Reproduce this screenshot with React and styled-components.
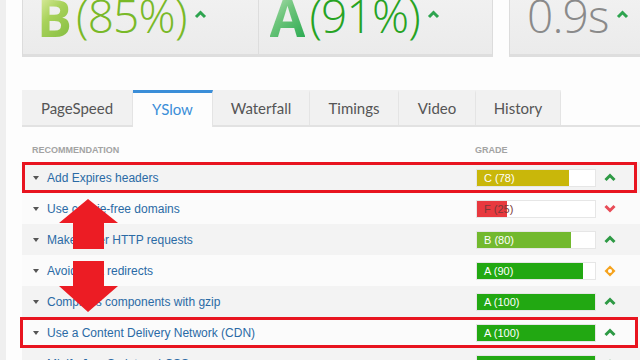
import React from "react";
import styled, { createGlobalStyle } from "styled-components";

const GlobalStyle = createGlobalStyle`
  html, body {
    margin: 0;
    padding: 0;
    background: #fdfdfd;
    overflow: hidden;
  }
  body {
    font-family: "Liberation Sans", Arial, sans-serif;
  }
`;

const rows = [
  { name: "Add Expires headers", grade: "C", score: 78, trend: "up", boxed: true },
  { name: "Use cookie-free domains", grade: "F", score: 25, trend: "down" },
  { name: "Make fewer HTTP requests", grade: "B", score: 80, trend: "up" },
  { name: "Avoid URL redirects", grade: "A", score: 90, trend: "same" },
  { name: "Compress components with gzip", grade: "A", score: 100, trend: "up" },
  { name: "Use a Content Delivery Network (CDN)", grade: "A", score: 100, trend: "up", boxed: true },
  { name: "Minify JavaScript and CSS", grade: "A", score: 100, trend: "up" },
];

const gradeColors = {
  A: "#22a812",
  B: "#72b92e",
  C: "#c9b70a",
  F: "#e8393f",
};

const tabs = [
  { label: "PageSpeed", width: 111 },
  { label: "YSlow", width: 80, active: true },
  { label: "Waterfall", width: 97 },
  { label: "Timings", width: 89 },
  { label: "Video", width: 77 },
  { label: "History", width: 85 },
];

const Page = styled.div`
  display: flex;
  height: 360px;
`;

const Strip = styled.div`
  width: 6px;
  flex: none;
  background: #efefef;
`;

const Main = styled.div`
  flex: 1;
  padding-left: 16px;
  min-width: 0;
`;

const ScoreRow = styled.div`
  display: flex;
  gap: 16px;
  margin-top: -24px;
  height: 81px;
`;

const Card = styled.div`
  display: flex;
  flex: none;
  width: ${(p) => p.$width}px;
  background: linear-gradient(#f3f3f3, #ebebeb);
  border: 1px solid #dcdcdc;
  border-bottom: 3px solid #dedede;
  box-sizing: border-box;
`;

const Score = styled.div`
  display: flex;
  align-items: flex-start;
  padding: 0 0 0 ${(p) => p.$pad}px;
  width: ${(p) => p.$width}px;
  box-sizing: border-box;
  border-right: ${(p) => (p.$divider ? "1px solid #dddddd" : "none")};
  font-family: "Open Sans", "Liberation Sans", sans-serif;
`;

const Letter = styled.span`
  font-size: 52px;
  font-weight: 700;
  line-height: 62px;
  margin-top: 9px;
  background: ${(p) => p.$gradient};
  -webkit-background-clip: text;
  background-clip: text;
  color: transparent;
  margin-right: 4px;
`;

const Value = styled.span`
  font-size: 46px;
  font-weight: 300;
  line-height: 64px;
  margin-top: 6px;
  color: ${(p) => p.$color};
  letter-spacing: -0.8px;
`;

const Caret = styled.svg`
  margin: 33px 0 0 7px;
  flex: none;
`;

const TabBar = styled.div`
  display: flex;
  margin-top: 33px;
  border-bottom: 2px solid #e2e2e2;
  height: 35px;
`;

const Tab = styled.div`
  width: ${(p) => p.$width}px;
  display: flex;
  align-items: center;
  justify-content: center;
  padding-bottom: 3px;
  font-family: Lato, "Open Sans", sans-serif;
  font-size: 15px;
  color: ${(p) => (p.$active ? "#3b8ed8" : "#555")};
  background: ${(p) => (p.$active ? "#fdfdfd" : "#f1f1f1")};
  border-top: 3px solid ${(p) => (p.$active ? "#3b8ed8" : "#f1f1f1")};
  border-right: 1px solid #e4e4e4;
  margin-bottom: ${(p) => (p.$active ? "-2px" : "0")};
  box-sizing: border-box;
`;

const Grid = styled.div`
  display: grid;
  grid-template-columns: 443px 120px 1fr;
  align-items: center;
  padding-left: 11px;
`;

const Header = styled(Grid)`
  height: 35px;
  padding-top: 10px;
  box-sizing: border-box;
  font-size: 9px;
  font-weight: 700;
  color: #a3a3a3;
  text-transform: uppercase;
  padding-left: 10px;
`;

const Table = styled.div`
  position: relative;
`;

const Row = styled(Grid)`
  position: relative;
  height: 31px;
  background: ${(p) => (p.$odd ? "#f3f3f3" : "#fbfbfb")};
  &::after {
    content: "";
    display: ${(p) => (p.$boxed ? "block" : "none")};
    position: absolute;
    left: ${(p) => (p.$first ? 0 : -2)}px;
    right: ${(p) => (p.$first ? 3 : 2)}px;
    top: 0;
    bottom: 0;
    border: 3px solid #e8141f;
    pointer-events: none;
  }
`;

const Name = styled.div`
  display: flex;
  align-items: center;
  font-size: 12px;
  color: #2a6aa5;
  white-space: nowrap;
  &::before {
    content: "";
    width: 0;
    height: 0;
    border-left: 3px solid transparent;
    border-right: 3px solid transparent;
    border-top: 4px solid #555;
    margin-right: 8px;
  }
`;

const Bar = styled.div`
  position: relative;
  height: 18px;
  background: #fff;
  border: 1px solid #e6e6e6;
  box-sizing: border-box;
`;

const Fill = styled.div`
  height: 100%;
  background: ${(p) => p.$color};
`;

const BarLabel = styled.span`
  position: absolute;
  left: 7px;
  top: 0;
  line-height: 16px;
  font-size: 11px;
  color: ${(p) => (p.$dark ? "#7a3a3a" : "#fff")};
`;

const Trend = styled.div`
  margin-left: 8px;
  display: flex;
  align-items: center;
`;

const Arrows = styled.svg`
  position: absolute;
  left: 0;
  top: 0;
  pointer-events: none;
`;

function ScoreCaret() {
  return (
    <Caret width="13" height="9" viewBox="0 0 13 9">
      <polyline points="2,7 6.5,2.5 11,7" fill="none" stroke="#2ea44f" strokeWidth="3" />
    </Caret>
  );
}

function TrendIcon({ type }) {
  if (type === "down") {
    return (
      <svg width="12" height="9" viewBox="0 0 12 9">
        <polyline points="1.5,2 6,6.5 10.5,2" fill="none" stroke="#e84c57" strokeWidth="3" />
      </svg>
    );
  }
  if (type === "same") {
    return (
      <svg width="12" height="12" viewBox="0 0 12 12">
        <polygon points="6,0.5 11.5,6 6,11.5 0.5,6" fill="#f5a21c" />
        <circle cx="6" cy="6" r="2" fill="#fff" />
      </svg>
    );
  }
  return (
    <svg width="12" height="9" viewBox="0 0 12 9">
      <polyline points="1.5,7 6,2.5 10.5,7" fill="none" stroke="#2e9a45" strokeWidth="3" />
    </svg>
  );
}

export default function App() {
  return (
    <>
      <GlobalStyle />
      <Page>
        <Strip />
        <Main>
          <ScoreRow>
            <Card $width={471}>
              <Score $width={236} $pad={14} $divider>
                <Letter $gradient="linear-gradient(135deg, #f3f7c0 0%, #a8d25a 45%, #7ab83a 100%)">B</Letter>
                <Value $color="#79b928">(85%)</Value>
                <ScoreCaret />
              </Score>
              <Score $width={234} $pad={11}>
                <Letter $gradient="linear-gradient(135deg, #cfe9cc 0%, #6cc47a 45%, #1ea54a 100%)">A</Letter>
                <Value $color="#27a323">(91%)</Value>
                <ScoreCaret />
              </Score>
            </Card>
            <Card $width={160}>
              <Score $width={160} $pad={17}>
                <Value $color="#8a8a8a">0.9s</Value>
                <ScoreCaret />
              </Score>
            </Card>
          </ScoreRow>

          <TabBar>
            {tabs.map((t) => (
              <Tab key={t.label} $active={t.active} $width={t.width}>
                {t.label}
              </Tab>
            ))}
          </TabBar>

          <Header>
            <span>Recommendation</span>
            <span>Grade</span>
          </Header>

          <Table>
            {rows.map((r, i) => (
              <Row key={r.name} $odd={i % 2 === 0} $boxed={r.boxed} $first={i === 0}>
                <Name>{r.name}</Name>
                <Bar>
                  <Fill $color={gradeColors[r.grade]} style={{ width: `${r.score}%` }} />
                  <BarLabel $dark={r.grade === "F"}>
                    {r.grade} ({r.score})
                  </BarLabel>
                </Bar>
                <Trend>
                  <TrendIcon type={r.trend} />
                </Trend>
              </Row>
            ))}
            <Arrows width="120" height="160" viewBox="0 0 120 160">
              <polygon points="66,37 96,61 82,61 82,87 51,87 51,61 37,61" fill="#ec1c24" />
              <polygon points="51,99 82,99 82,124 96,124 66,150 37,124 51,124" fill="#ec1c24" />
            </Arrows>
          </Table>
        </Main>
      </Page>
    </>
  );
}
